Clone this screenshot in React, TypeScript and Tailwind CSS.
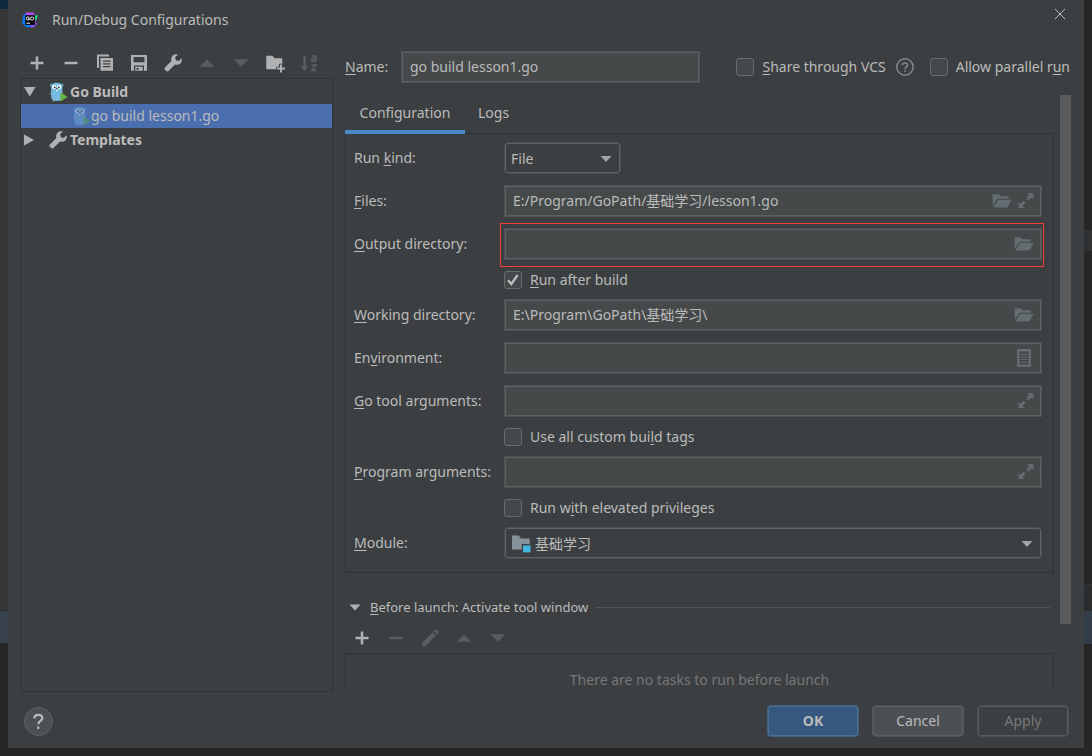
import React, { useState } from "react";

type IconProps = { className?: string };

function Svg({ className = "", children }: { className?: string; children: React.ReactNode }) {
  return (
    <svg viewBox="0 0 16 16" className={`size-5 shrink-0 ${className}`} fill="currentColor" aria-hidden="true">
      {children}
    </svg>
  );
}

const AddIcon = ({ className }: IconProps) => (
  <Svg className={className}><path d="M9 7h4.2v2H9v4.2H7V9H2.800V7H7V2.800h2z" /></Svg>
);
const RemoveIcon = ({ className }: IconProps) => (
  <Svg className={className}><path d="M2.800 7h10.400v2H2.800z" /></Svg>
);
const UpIcon = ({ className }: IconProps) => (
  <Svg className={className}><path d="M2.200 11h11.600L8 5z" /></Svg>
);
const DownIcon = ({ className }: IconProps) => (
  <Svg className={className}><path d="M2.200 5h11.600L8 11z" /></Svg>
);
const CopyIcon = ({ className }: IconProps) => (
  <Svg className={className}>
    <path d="M1.600 1.200h9.600v1.600H3.200v9.200H1.600z" />
    <path fillRule="evenodd" d="M4.400 4h10v10.200h-10zM6.400 6v1h6V6zm0 2.200v1h6v-1zm0 2.200v1h6v-1z" />
  </Svg>
);
const SaveIcon = ({ className }: IconProps) => (
  <Svg className={className}>
    <path fillRule="evenodd" d="M1.600 1.600h12.800v12.600h-2.400V10H4v4.200H1.600zM3.600 3.200v4.200h8.800V3.200z" />
    <path fillRule="evenodd" d="M5 11h6v3.200H5zm1 1v1.400h1.800V12z" />
  </Svg>
);
const WrenchIcon = ({ className }: IconProps) => (
  <Svg className={className}>
    <path d="M14.900 4.200 12.600 6.300l-2.300-.6-.6-2.300 2.200-2.200c-1.500-.5-3.200-.1-4.300 1.000-1.100 1.100-1.400 2.700-.9 4.100L1.500 11.500c-.5.5-.5 1.300 0 1.800l1.100 1.100c.5.5 1.300.5 1.800 0l5.200-5.200c1.400.5 3.200.2 4.300-.9 1.100-1.100 1.500-2.700 1-4.100z" />
  </Svg>
);
const FolderAddIcon = ({ className }: IconProps) => (
  <Svg className={className}>
    <path d="M1 2.200h5l1.600 2h6.200v4.400h-2.600v2.400H9v2H1z" />
    <path d="M12 9.200h1.600v2.400H16v1.600h-2.400v2.400H12v-2.400H9.600v-1.600H12z" />
  </Svg>
);
const SortIcon = ({ className }: IconProps) => (
  <Svg className={className}>
    <path d="M3.600 2h1.700v8.600h2.500L4.450 14.400 1.100 10.600h2.500z" />
    <path fill="none" stroke="currentColor" strokeWidth="1.500" d="M10.200 2.700q3.300-1 3.300.9v3.300M13.500 4.500q-3.400-.2-3.400 1.200c0 1.500 2.600 1.200 3.400-.2M10.100 9.800h3.500l-3.300 4.100h3.600" />
  </Svg>
);
const PencilIcon = ({ className }: IconProps) => (
  <Svg className={className}>
    <path d="M10.100 3.500l2.500 2.500-8 8.300H1.700v-2.800zM10.900 2.700l1.300-1.300q.7-.6 1.400 0l1.200 1.200q.6.700 0 1.400l-1.300 1.200z" />
  </Svg>
);
const OpenFolderIcon = ({ className }: IconProps) => (
  <Svg className={className}>
    <path d="M.5 2.500h5l1.500 1.700h6.300v2H4.400L.5 12z" />
    <path d="M4.900 7h10.800l-3.300 6.200H1z" />
  </Svg>
);
const ExpandIcon = ({ className }: IconProps) => (
  <Svg className={className}>
    <path d="M10.600 1.600h5v5L13.900 4.900 11.400 7.400 9.900 5.900l2.400-2.600zM3.600 8.600l1.700 1.700 2.400-2.500 1.600 1.500-2.500 2.600 1.800 1.700h-5z" />
  </Svg>
);
const ListIcon = ({ className }: IconProps) => (
  <Svg className={className}>
    <path fillRule="evenodd" d="M2.400.8h11.200v14.400H2.400zM4.400 2.800v10.400h7.200V2.800z" />
    <path d="M5.400 4.700h5.200v.9H5.400zm0 2h5.200v.9H5.400zm0 2h5.200v.9H5.400zm0 2h5.200v.9H5.400z" />
  </Svg>
);
const ModuleIcon = ({ className }: IconProps) => (
  <Svg className={className}>
    <path fill="#87939a" d="M.8 2h5.400l1.800 2.300h7v4.500H8.600v4.400H.8z" />
    <path fill="#40b6e0" d="M9.600 9.900h6v5.600h-6z" />
  </Svg>
);
const GopherIcon = ({ className }: IconProps) => (
  <Svg className={className}>
    <path fill="#b8937f" d="M2.600 8.300l-1.300 1 1.300.6zM4.300 14l-1 1.500 2.300-.5zM9 14.400l1.300 1.100.5-1.300z" />
    <circle cx="3" cy="2.500" r="1.300" fill="#5c9fc4" />
    <circle cx="11" cy="2.500" r="1.300" fill="#5c9fc4" />
    <path fill="#78bde0" d="M2.500 4.900C2.500 1.900 4.100.6 7 .6s4.500 1.300 4.500 4.300v6.300c0 2.600-1.500 4-4.500 4s-4.500-1.400-4.500-4z" />
    <circle cx="5" cy="4" r="1.700" fill="#fff" />
    <circle cx="9" cy="4" r="1.700" fill="#fff" />
    <circle cx="5.400" cy="4.200" r=".7" fill="#222" />
    <circle cx="8.700" cy="4.200" r=".7" fill="#222" />
    <path fill="#333" d="M6.300 5.100h1.500v.9H6.300z" />
    <path fill="#fff" d="M6.400 6h1.300v1.100H6.400z" />
    <path fill="#62b543" d="M10 8.200v7.400l5.800-3.700z" />
  </Svg>
);
const GoLandIcon = ({ className }: IconProps) => (
  <svg viewBox="0 0 16 16" className={className} aria-hidden="true">
    <path fill="#087cfa" d="M1 3.600 4.600.7l4 1.300 1 12.600-4.500.9L0 11.400l.9-3.600z" />
    <path fill="#b74af7" d="M3.800.5h7.700l2.700 4.200-1 9.500-3.600 1.600L4 4z" />
    <path fill="#7b5cff" d="M8 13l5.300-2.500 1.600 1.500-5.300 3.700z" />
    <path fill="#21d789" d="M11.800 4.300 16 2.800l-1.400 5-2.800 1z" />
    <path fill="#000" d="M3.200 3.200h9.700v9.700H3.200z" />
    <path fill="none" stroke="#fff" strokeWidth="1" d="M7.400 5.100H5.300q-.9 0-.9 1.400t.9 1.400h2V6.600H6.200M9 5.100h1.700q.9 0 .9 1.400t-.9 1.400H9.200q-.9 0-.9-1.400T9 5.100M4.400 11.200h3.800" />
  </svg>
);

function ToolButton({ label, disabled, children }: { label: string; disabled?: boolean; children: React.ReactNode }) {
  return (
    <button
      type="button"
      aria-label={label}
      disabled={disabled}
      className="size-5 text-[#afb1b3] disabled:text-[#5b5d5e]"
    >
      {children}
    </button>
  );
}

/** Text with its mnemonic letter underlined, marked as "_x" in the source string. */
function Mnemonic({ text }: { text: string }) {
  const at = text.indexOf("_");
  if (at < 0) return <>{text}</>;
  return (
    <>
      {text.slice(0, at)}
      <span className="underline underline-offset-2">{text[at + 1]}</span>
      {text.slice(at + 2)}
    </>
  );
}

function Check({ text, defaultChecked = false }: { text: string; defaultChecked?: boolean }) {
  const [checked, setChecked] = useState(defaultChecked);
  return (
    <label className="flex h-[17px] items-center gap-2 whitespace-nowrap">
      <span className="relative flex size-[18px] shrink-0">
        <input
          type="checkbox"
          checked={checked}
          onChange={(e) => setChecked(e.target.checked)}
          className="size-full appearance-none rounded-[3px] border border-[#6b6b6b] bg-[#43494a]"
        />
        {checked && (
          <svg viewBox="0 0 18 18" className="pointer-events-none absolute inset-0" fill="none" stroke="#bbb" strokeWidth="2.400" aria-hidden="true">
            <path d="M4 9.300l3.300 3.700L13.600 4" />
          </svg>
        )}
      </span>
      <span><Mnemonic text={text} /></span>
    </label>
  );
}

function Row({ id, label, children }: { id: string; label: string; children: React.ReactNode }) {
  return (
    <div className="flex h-8 items-center">
      <label htmlFor={id} className="w-[150px] shrink-0 whitespace-nowrap">
        <Mnemonic text={label} />
      </label>
      {children}
    </div>
  );
}

function Field({ id, value = "", highlighted, children }: { id: string; value?: string; highlighted?: boolean; children?: React.ReactNode }) {
  return (
    <div className="relative flex h-8 flex-1 items-center border border-[#4f5254] bg-[#45494a] pr-[7px] inset-ring inset-ring-[#5e6162]">
      <input id={id} defaultValue={value} className="h-full min-w-0 flex-1 bg-transparent pb-[2px] pl-2 outline-none" />
      <div className="flex gap-[2px]">{children}</div>
      {highlighted && <span className="pointer-events-none absolute -top-[6px] -right-[3px] -bottom-2 -left-[5px] border border-[#f93a37]" />}
    </div>
  );
}

function InnerButton({ label, children }: { label: string; children: React.ReactNode }) {
  return (
    <button type="button" aria-label={label} className="size-5 text-[#626c71]">
      {children}
    </button>
  );
}

const selectBox = "h-8 w-full appearance-none rounded-[4px] border border-[#4c4f51] bg-[#3c3f41] inset-ring inset-ring-[#616465] outline-none";

function SelectArrow() {
  return (
    <svg viewBox="0 0 12 6" className="pointer-events-none absolute top-[14px] right-[9px] h-[6px] w-3" fill="#a2a4a6" aria-hidden="true">
      <path d="M.5 0h11L6 6z" />
    </svg>
  );
}

function ConfigurationTree() {
  return (
    <ul role="tree" aria-label="Configurations" className="flex-1 border border-[#303234] pt-px">
      <li role="treeitem" aria-expanded="true" aria-selected="false">
        <div className="flex h-6 items-center pl-[3px] font-bold">
          <svg viewBox="0 0 12 12" className="mr-3 size-3 shrink-0" fill="#afb1b3" aria-hidden="true"><path d="M0 1h11.500L5.750 10.500z" /></svg>
          <GopherIcon />
          <span className="pl-[2px]">Go Build</span>
        </div>
        <ul role="group">
          <li role="treeitem" aria-selected="true" className="flex h-6 items-center bg-[#4b6eaf] pl-[50px]">
            <GopherIcon className="opacity-40" />
            <span>go build lesson1.go</span>
          </li>
        </ul>
      </li>
      <li role="treeitem" aria-expanded="false" aria-selected="false" className="flex h-6 items-center pl-[3px] font-bold">
        <svg viewBox="0 0 12 12" className="mr-3 size-3 shrink-0" fill="#afb1b3" aria-hidden="true"><path d="M0 .5 10 6 0 11.500z" /></svg>
        <WrenchIcon className="text-[#afb1b3]" />
        <span className="pl-[2px]">Templates</span>
      </li>
    </ul>
  );
}

function ConfigurationForm() {
  return (
    <div className="flex flex-col gap-[11px] border border-[#303234] pt-2 pr-[11px] pb-[13px] pl-2">
      <Row id="kind" label="Run _kind:">
        <div className="relative w-[117px]">
          <select id="kind" className={`${selectBox} pt-px pl-[6px]`}>
            <option>File</option>
            <option>Directory</option>
            <option>Package</option>
          </select>
          <SelectArrow />
        </div>
      </Row>
      <Row id="files" label="_Files:">
        <Field id="files" value="E:/Program/GoPath/基础学习/lesson1.go">
          <InnerButton label="Browse files"><OpenFolderIcon /></InnerButton>
          <InnerButton label="Expand files"><ExpandIcon /></InnerButton>
        </Field>
      </Row>
      <Row id="output" label="_Output directory:">
        <Field id="output" highlighted>
          <InnerButton label="Browse output directory"><OpenFolderIcon /></InnerButton>
        </Field>
      </Row>
      <div className="pl-[150px]"><Check text="_Run after build" defaultChecked /></div>
      <Row id="working" label="_Working directory:">
        <Field id="working" value={"E:\\Program\\GoPath\\基础学习\\"}>
          <InnerButton label="Browse working directory"><OpenFolderIcon /></InnerButton>
        </Field>
      </Row>
      <Row id="env" label="En_vironment:">
        <Field id="env">
          <InnerButton label="Edit environment"><ListIcon /></InnerButton>
        </Field>
      </Row>
      <Row id="goargs" label="_Go tool arguments:">
        <Field id="goargs">
          <InnerButton label="Expand Go tool arguments"><ExpandIcon /></InnerButton>
        </Field>
      </Row>
      <div className="pl-[150px]"><Check text="Use all custom bui_ld tags" /></div>
      <Row id="args" label="_Program arguments:">
        <Field id="args">
          <InnerButton label="Expand program arguments"><ExpandIcon /></InnerButton>
        </Field>
      </Row>
      <div className="pl-[150px]"><Check text="Run w_ith elevated privileges" /></div>
      <Row id="module" label="_Module:">
        <div className="relative flex-1">
          <select id="module" className={`${selectBox} pt-px pl-[30px]`}>
            <option>基础学习</option>
          </select>
          <ModuleIcon className="pointer-events-none absolute top-[6px] left-[7px]" />
          <SelectArrow />
        </div>
      </Row>
    </div>
  );
}

function BeforeLaunch() {
  return (
    <section aria-label="Before launch" className="pt-6">
      <div className="flex h-5 items-center pr-1 pl-1 text-[13px]">
        <button type="button" className="flex items-center gap-[9px] whitespace-nowrap">
          <svg viewBox="0 0 12 6" className="h-[7px] w-3" fill="#afb1b3" aria-hidden="true"><path d="M.5 0h11L6 6z" /></svg>
          <span><Mnemonic text="_Before launch: Activate tool window" /></span>
        </button>
        <span className="ml-2 h-px flex-1 bg-[#515456]" />
      </div>
      <div className="mt-[11px] flex gap-[14px] pl-[7px]">
        <ToolButton label="Add task"><AddIcon /></ToolButton>
        <ToolButton label="Remove task" disabled><RemoveIcon /></ToolButton>
        <ToolButton label="Edit task" disabled><PencilIcon /></ToolButton>
        <ToolButton label="Move task up" disabled><UpIcon /></ToolButton>
        <ToolButton label="Move task down" disabled><DownIcon /></ToolButton>
      </div>
      <div className="mt-[5px] h-24 border border-[#303234] pt-4 text-center text-[#777]">There are no tasks to run before launch</div>
    </section>
  );
}

export default function App() {
  return (
    <div className="flex h-screen min-h-[600px] bg-[#262626] font-['Noto_Sans','Noto_Sans_CJK_SC',sans-serif] text-[14px] leading-5 text-[#bbb]">
      <div aria-hidden="true" className="flex w-2 shrink-0 flex-col">
        <span className="h-[9px] bg-[#0d293e]" />
        <span className="h-[601px] bg-[#353637]" />
        <span className="h-[34px] border-y border-[#2b2b2b] bg-[#38424f]" />
      </div>
      <div role="dialog" aria-label="Run/Debug Configurations" className="mb-2 flex min-w-0 flex-1 flex-col bg-[#3c3f41]">
        <header className="flex h-10 items-center pl-[14px] pr-4">
          <GoLandIcon className="size-4" />
          <h1 className="flex-1 pl-[14px] text-[14px]">Run/Debug Configurations</h1>
          <button type="button" aria-label="Close" className="mb-3 size-4">
            <svg viewBox="0 0 16 16" stroke="#bbb" strokeWidth="1" aria-hidden="true"><path d="M3 3l10 10M13 3 3 13" /></svg>
          </button>
        </header>

        <main className="flex min-h-0 flex-1 pl-3">
          <div className="mr-3 flex w-[313px] shrink-0 flex-col">
            <div role="toolbar" aria-label="Configuration actions" className="flex h-[38px] shrink-0 items-center gap-[14px] pt-2 pl-[7px]">
              <ToolButton label="Add"><AddIcon /></ToolButton>
              <ToolButton label="Remove"><RemoveIcon /></ToolButton>
              <ToolButton label="Copy"><CopyIcon /></ToolButton>
              <ToolButton label="Save"><SaveIcon /></ToolButton>
              <ToolButton label="Edit templates"><WrenchIcon /></ToolButton>
              <ToolButton label="Move up" disabled><UpIcon /></ToolButton>
              <ToolButton label="Move down" disabled><DownIcon /></ToolButton>
              <ToolButton label="New folder"><FolderAddIcon /></ToolButton>
              <ToolButton label="Sort" disabled><SortIcon /></ToolButton>
            </div>
            <ConfigurationTree />
          </div>

          <div className="flex min-w-0 flex-1 flex-col">
            <div className="flex h-[55px] shrink-0 items-start pt-[11px] pr-[14px]">
              <div className="flex h-8 min-w-0 flex-1 items-center">
                <label htmlFor="name" className="w-14 shrink-0"><Mnemonic text="_Name:" /></label>
                <input id="name" defaultValue="go build lesson1.go" className="h-8 min-w-0 flex-1 border border-[#4f5254] bg-[#45494a] px-2 pb-[2px] inset-ring inset-ring-[#5e6162] outline-none" />
              </div>
              <div className="ml-9 flex h-8 shrink-0 items-center">
                <Check text="_Share through VCS" />
                <button type="button" aria-label="About sharing" className="mx-[10px] size-[18px]">
                  <svg viewBox="0 0 18 18" fill="none" stroke="#7f8b91" strokeWidth="1.500" aria-hidden="true">
                    <circle cx="9" cy="9" r="8.200" />
                    <path d="M6.400 7.200Q6.400 5 9 5t2.600 2.200C11.600 9 9 8.800 9 11M9 12v1.700" />
                  </svg>
                </button>
                <div className="ml-[6px]"><Check text="Allow parallel r_un" /></div>
              </div>
            </div>

            <div className="flex min-h-0 flex-1 pr-[13px] pb-1">
              <div className="min-w-0 flex-1 overflow-hidden">
                <div role="tablist" className="flex h-[38px]">
                  <button type="button" role="tab" aria-selected="true" className="relative h-[39px] min-w-[120px] border-b-4 border-[#4a88c7] px-3">Configuration</button>
                  <button type="button" role="tab" aria-selected="false" className="h-[39px] border-b-4 border-transparent px-[13px]">Logs</button>
                </div>
                <ConfigurationForm />
                <BeforeLaunch />
              </div>
              <div aria-hidden="true" className="ml-[6px] h-[529px] w-[11px] bg-[#595b5d]" />
            </div>
          </div>
        </main>

        <footer className="flex h-14 shrink-0 items-center gap-[13px] pt-[2px] pr-[15px] pl-4">
          <button type="button" aria-label="Help" className="mr-auto size-[29px] rounded-full border border-[#5e6162] bg-[#4c5052]">
            <svg viewBox="0 0 27 27" fill="none" stroke="#bbb" strokeWidth="2.200" aria-hidden="true">
              <path d="M9.300 10.500Q9.300 6.900 13.300 6.900t4 3.400C17.300 13 13.300 13 13.300 16.200M13.300 18.400v2.500" />
            </svg>
          </button>
          <button type="button" className="h-8 w-[92px] rounded-[4px] border border-[#43617f] bg-[#365880] font-bold inset-ring inset-ring-[#4c708c]">OK</button>
          <button type="button" className="h-8 w-[92px] rounded-[4px] border border-[#505355] bg-[#4c5052] inset-ring inset-ring-[#5e6060]">Cancel</button>
          <button type="button" disabled className="h-8 w-[92px] rounded-[4px] border border-[#4c4f51] text-[#777] inset-ring inset-ring-[#595c5d]">Apply</button>
        </footer>
      </div>
      <div aria-hidden="true" className="flex w-2 shrink-0 flex-col">
        <span className="h-[230px]" />
        <span className="h-[21px] bg-[#303132]" />
        <span className="h-[333px]" />
        <span className="h-[27px] border-t border-[#333] bg-[#2b2c2d]" />
        <span className="h-[33px] bg-[#333d49]" />
      </div>
    </div>
  );
}
